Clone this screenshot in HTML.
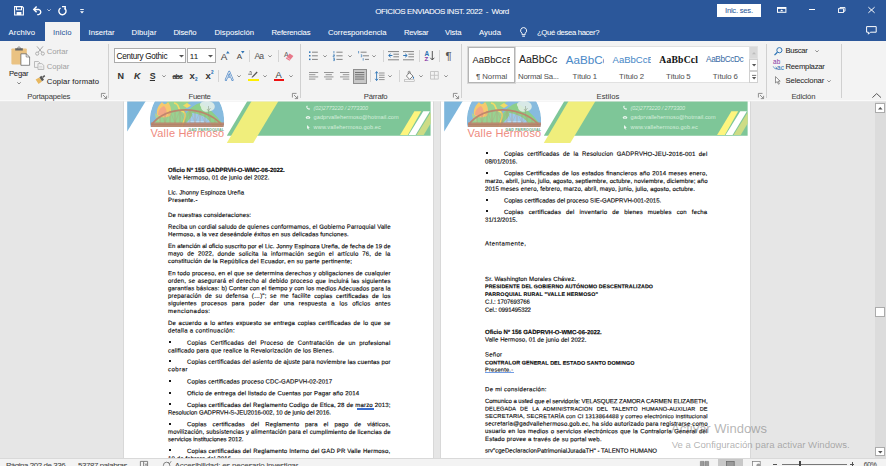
<!DOCTYPE html>
<html><head><meta charset="utf-8"><title>Word</title>
<style>
*{box-sizing:border-box;margin:0;padding:0}
html,body{width:886px;height:466px;overflow:hidden;background:#e6e6e6;font-family:"Liberation Sans",sans-serif;}
.t{position:absolute;white-space:pre;-webkit-text-stroke:0.05px;}
.a{position:absolute}
#title{position:absolute;left:0;top:0;width:886px;height:41px;background:#2b579a}
#tabsel{position:absolute;left:45px;top:22px;width:35px;height:20px;background:#f3f3f3}
#ribbon{position:absolute;left:0;top:41px;width:886px;height:60px;background:#f3f3f3;border-bottom:1px solid #fafafa}
#rshade{position:absolute;left:0;top:101px;width:886px;height:1px;background:rgba(236,236,236,0.55)}
.sep{position:absolute;top:44px;width:1px;height:54px;background:#d0d0d0}
.ssep{position:absolute;width:1px;height:12px;background:#d4d4d4}
#doc{position:absolute;left:0;top:101px;width:886px;height:358px;background:#e6e6e6;overflow:hidden}
.page{position:absolute;top:101px;height:358px;background:#fff;overflow:hidden;border-left:1px solid #d8d8d8;border-right:1px solid #d8d8d8}
#status{position:absolute;left:0;top:458px;width:886px;height:8px;background:#f3f3f3;overflow:hidden;border-top:1px solid #d9d9d9}
svg{position:absolute;overflow:visible}

</style></head><body>
<div id="doc"></div>
<div class="page" style="left:123.0px;width:311.0px"></div><svg style="left:124.0px;top:101px" width="310" height="44" viewBox="0 0 310 44"><path d="M3.2 0H21.8L3.2 30.6Z" fill="#7db6dc"/><path d="M123.4 0H306.6V34.8H102.8Z" fill="#7ec698"/><path d="M127.6 0H154.5L129.3 42H102.8Z" fill="#f0ee7c"/><path d="M290.4 10.3H297.2L283.8 34H276.1Z" fill="#fdf57e"/><path d="M299.3 10.3H305.9L291.6 34H284.6Z" fill="#ffffff"/><path d="M306.6 11.4V22.6L299.7 34H292.6Z" fill="#cddc85"/><clipPath id="cl124"><path d="M25.8 0H100.4V26H25.8Z"/></clipPath><clipPath id="cc124"><circle cx="63" cy="19" r="37.2"/></clipPath><g clip-path="url(#cl124)" opacity="0.92"><g clip-path="url(#cc124)"><circle cx="63" cy="19" r="37.2" fill="#7db6dc"/><path d="M30 26C32 14 38 4 46 -1H66C62 6 58 14 60 26Z" fill="#8fd088"/><path d="M56 26C60 12 68 4 76 2C84 6 92 14 98 22V26Z" fill="#84cb80"/><path d="M52 -1C58 2 64 2 70 -1" fill="#a9d98a"/><path d="M60 26C62 20 70 16 68 12C78 13 88 19 88 26Z" fill="#93c6ea"/><path d="M64 23H84M66 20.5H80" stroke="#dff0fb" stroke-width="0.5" opacity="0.8"/><path d="M50 2C57 3 52 8 58 10C64 12 60 18 58 26" fill="none" stroke="#f0d85a" stroke-width="1.6"/><path d="M59 4.5L63 2L67 4.5L63 7Z" fill="#f0d85a"/><path d="M33 14C32 8 35 4 38 1C40 4 42 4 44 1C47 5 48 10 46 15C42 17 36 17 33 14Z" fill="#f6c561"/><path d="M34 14C34 9 37 6 40 5C43 8 43 12 42 16Z" fill="#f2a07c"/><path d="M31 12C34 14 36 17 36 21C33 20 31 17 31 12Z" fill="#a9cf8f"/><path d="M78 1C82 -1 88 0 90 3C92 6 90 10 86 10C82 12 77 10 77 6C75 4 76 2 78 1Z" fill="#e4f1e6" opacity="0.85"/><path d="M84.5 5V16M83 8L84.5 10L86.5 7" stroke="#8a9a82" stroke-width="0.6" fill="none"/><path d="M28 23.4C42 4 80 4 97.4 23.4" fill="none" stroke="#b8775e" stroke-width="1.8" opacity="0.92"/><path d="M36 15V22M41 11.6V22M46 9.8V22M51 8.8V22M56 8.6V22M61 8.6V22M66 8.8V22M71 9.6V22M76 11V22M81 13V22M86 15.6V22M91 18.6V22" stroke="#b9836a" stroke-width="0.6" opacity="0.75"/><path d="M38 14L41 22L46 10L51 22L56 9L61 22L66 9L71 22L76 11L81 22L86 16" stroke="#b9836a" stroke-width="0.4" fill="none" opacity="0.6"/><path d="M27 21.4H100V26.2H27Z" fill="#b8775e" opacity="0.88"/><path d="M27 23.6H100" stroke="#9a6650" stroke-width="0.5" opacity="0.6"/></g></g><g transform="translate(-1.4 0)"><path d="M183.6 5.2C183.6 7.4 185 8.8 187 8.8L187.4 7.8L186.2 7L185.8 7.4C185.2 7.2 184.8 6.6 184.6 6L185.2 5.8L184.6 4.6Z" fill="#eaf6ee"/><ellipse cx="185.4" cy="16.6" rx="2.2" ry="1.5" fill="#eaf6ee"/><ellipse cx="185.4" cy="16.8" rx="0.9" ry="0.6" fill="#7ec698"/><path d="M184.4 24V28L185.4 27.2L186.2 28.8L186.8 28.5L186 27L187.2 26.8Z" fill="#eaf6ee"/></g></svg>
<div class="t" style="left:313.60px;top:104.79px;font-size:5.4px;line-height:7.02px;color:#d6eedd;font-style:italic;letter-spacing:-0.083px;-webkit-text-stroke:0;">(02)2773220 / 2773300</div>
<div class="t" style="left:313.60px;top:114.36px;font-size:5.6px;line-height:7.28px;color:#d6eedd;letter-spacing:0.056px;-webkit-text-stroke:0;">gadprvallehermoso@hotmail.com</div>
<div class="t" style="left:313.60px;top:124.06px;font-size:5.6px;line-height:7.28px;color:#d6eedd;letter-spacing:0.101px;-webkit-text-stroke:0;">www.vallehermoso.gob.ec</div>
<div class="t" style="left:150.60px;top:126.45px;font-size:11px;line-height:14.3px;color:#ee8a80;letter-spacing:0.189px;-webkit-text-stroke:0;">Valle Hermoso</div>
<div class="t" style="left:188.40px;top:128.06px;font-size:3.6px;line-height:4.68px;color:#6faa86;font-weight:bold;letter-spacing:0.210px;">GAD PARROQUIAL</div>
<div class="page" style="left:440.0px;width:311.0px"></div><svg style="left:441.0px;top:101px" width="310" height="44" viewBox="0 0 310 44"><path d="M3.2 0H21.8L3.2 30.6Z" fill="#7db6dc"/><path d="M123.4 0H306.6V34.8H102.8Z" fill="#7ec698"/><path d="M127.6 0H154.5L129.3 42H102.8Z" fill="#f0ee7c"/><path d="M290.4 10.3H297.2L283.8 34H276.1Z" fill="#fdf57e"/><path d="M299.3 10.3H305.9L291.6 34H284.6Z" fill="#ffffff"/><path d="M306.6 11.4V22.6L299.7 34H292.6Z" fill="#cddc85"/><clipPath id="cl441"><path d="M25.8 0H100.4V26H25.8Z"/></clipPath><clipPath id="cc441"><circle cx="63" cy="19" r="37.2"/></clipPath><g clip-path="url(#cl441)" opacity="0.92"><g clip-path="url(#cc441)"><circle cx="63" cy="19" r="37.2" fill="#7db6dc"/><path d="M30 26C32 14 38 4 46 -1H66C62 6 58 14 60 26Z" fill="#8fd088"/><path d="M56 26C60 12 68 4 76 2C84 6 92 14 98 22V26Z" fill="#84cb80"/><path d="M52 -1C58 2 64 2 70 -1" fill="#a9d98a"/><path d="M60 26C62 20 70 16 68 12C78 13 88 19 88 26Z" fill="#93c6ea"/><path d="M64 23H84M66 20.5H80" stroke="#dff0fb" stroke-width="0.5" opacity="0.8"/><path d="M50 2C57 3 52 8 58 10C64 12 60 18 58 26" fill="none" stroke="#f0d85a" stroke-width="1.6"/><path d="M59 4.5L63 2L67 4.5L63 7Z" fill="#f0d85a"/><path d="M33 14C32 8 35 4 38 1C40 4 42 4 44 1C47 5 48 10 46 15C42 17 36 17 33 14Z" fill="#f6c561"/><path d="M34 14C34 9 37 6 40 5C43 8 43 12 42 16Z" fill="#f2a07c"/><path d="M31 12C34 14 36 17 36 21C33 20 31 17 31 12Z" fill="#a9cf8f"/><path d="M78 1C82 -1 88 0 90 3C92 6 90 10 86 10C82 12 77 10 77 6C75 4 76 2 78 1Z" fill="#e4f1e6" opacity="0.85"/><path d="M84.5 5V16M83 8L84.5 10L86.5 7" stroke="#8a9a82" stroke-width="0.6" fill="none"/><path d="M28 23.4C42 4 80 4 97.4 23.4" fill="none" stroke="#b8775e" stroke-width="1.8" opacity="0.92"/><path d="M36 15V22M41 11.6V22M46 9.8V22M51 8.8V22M56 8.6V22M61 8.6V22M66 8.8V22M71 9.6V22M76 11V22M81 13V22M86 15.6V22M91 18.6V22" stroke="#b9836a" stroke-width="0.6" opacity="0.75"/><path d="M38 14L41 22L46 10L51 22L56 9L61 22L66 9L71 22L76 11L81 22L86 16" stroke="#b9836a" stroke-width="0.4" fill="none" opacity="0.6"/><path d="M27 21.4H100V26.2H27Z" fill="#b8775e" opacity="0.88"/><path d="M27 23.6H100" stroke="#9a6650" stroke-width="0.5" opacity="0.6"/></g></g><g transform="translate(-1.4 0)"><path d="M183.6 5.2C183.6 7.4 185 8.8 187 8.8L187.4 7.8L186.2 7L185.8 7.4C185.2 7.2 184.8 6.6 184.6 6L185.2 5.8L184.6 4.6Z" fill="#eaf6ee"/><ellipse cx="185.4" cy="16.6" rx="2.2" ry="1.5" fill="#eaf6ee"/><ellipse cx="185.4" cy="16.8" rx="0.9" ry="0.6" fill="#7ec698"/><path d="M184.4 24V28L185.4 27.2L186.2 28.8L186.8 28.5L186 27L187.2 26.8Z" fill="#eaf6ee"/></g></svg>
<div class="t" style="left:630.60px;top:104.79px;font-size:5.4px;line-height:7.02px;color:#d6eedd;font-style:italic;letter-spacing:-0.083px;-webkit-text-stroke:0;">(02)2773220 / 2773300</div>
<div class="t" style="left:630.60px;top:114.36px;font-size:5.6px;line-height:7.28px;color:#d6eedd;letter-spacing:0.056px;-webkit-text-stroke:0;">gadprvallehermoso@hotmail.com</div>
<div class="t" style="left:630.60px;top:124.06px;font-size:5.6px;line-height:7.28px;color:#d6eedd;letter-spacing:0.101px;-webkit-text-stroke:0;">www.vallehermoso.gob.ec</div>
<div class="t" style="left:467.60px;top:126.45px;font-size:11px;line-height:14.3px;color:#ee8a80;letter-spacing:0.189px;-webkit-text-stroke:0;">Valle Hermoso</div>
<div class="t" style="left:505.40px;top:128.06px;font-size:3.6px;line-height:4.68px;color:#6faa86;font-weight:bold;letter-spacing:0.210px;">GAD PARROQUIAL</div>
<div class="t" style="left:168.20px;top:165px;font-size:6.05px;line-height:8px;color:#0a0a0a;transform-origin:0 50%;transform:translateY(0.90px) rotate(0.03deg);font-weight:bold;letter-spacing:-0.060px;-webkit-text-stroke:0.14px #0a0a0a;">Oficio N° 155 GADPRVH-O-WMC-06-2022.</div>
<div class="t" style="left:168.20px;top:173px;font-size:6.05px;line-height:8px;color:#0a0a0a;transform-origin:0 50%;transform:translateY(0.40px) rotate(0.03deg);letter-spacing:0.077px;-webkit-text-stroke:0.14px #0a0a0a;">Valle Hermoso, 01 de junio del 2022.</div>
<div class="t" style="left:168.20px;top:188px;font-size:6.05px;line-height:8px;color:#0a0a0a;transform-origin:0 50%;transform:translateY(0.40px) rotate(0.03deg);letter-spacing:0.028px;-webkit-text-stroke:0.14px #0a0a0a;">Lic. Jhonny Espinoza Ureña</div>
<div class="t" style="left:168.20px;top:195px;font-size:6.05px;line-height:8px;color:#0a0a0a;transform-origin:0 50%;transform:translateY(0.90px) rotate(0.03deg);letter-spacing:0.177px;-webkit-text-stroke:0.14px #0a0a0a;">Presente.-</div>
<div class="t" style="left:168.20px;top:210px;font-size:6.05px;line-height:8px;color:#0a0a0a;transform-origin:0 50%;transform:translateY(0.90px) rotate(0.03deg);letter-spacing:0.123px;-webkit-text-stroke:0.14px #0a0a0a;">De nuestras consideraciones:</div>
<div class="t" style="left:168.20px;top:222px;font-size:6.05px;line-height:8px;color:#0a0a0a;transform-origin:0 50%;transform:translateY(0.70px) rotate(0.03deg);letter-spacing:0.109px;-webkit-text-stroke:0.14px #0a0a0a;">Reciba un cordial saludo de quienes conformamos, el Gobierno Parroquial Valle</div>
<div class="t" style="left:168.20px;top:230px;font-size:6.05px;line-height:8px;color:#0a0a0a;transform-origin:0 50%;transform:translateY(0.20px) rotate(0.03deg);letter-spacing:0.090px;-webkit-text-stroke:0.14px #0a0a0a;">Hermoso, a la vez deseándole éxitos en sus delicadas funciones.</div>
<div class="t" style="left:168.20px;top:242px;font-size:6.05px;line-height:8px;color:#0a0a0a;transform-origin:0 50%;transform:translateY(0.10px) rotate(0.03deg);letter-spacing:0.047px;-webkit-text-stroke:0.14px #0a0a0a;">En atención al oficio suscrito por el Lic. Jonny Espinoza Ureña, de fecha de 19 de</div>
<div class="t" style="left:168.20px;top:249px;font-size:6.05px;line-height:8px;color:#0a0a0a;transform-origin:0 50%;transform:translateY(0.60px) rotate(0.03deg);letter-spacing:0.150px;width:222.60px;text-align:justify;text-align-last:justify;white-space:normal;-webkit-text-stroke:0.14px #0a0a0a;">mayo de 2022, donde solicita la información según el artículo 76, de la</div>
<div class="t" style="left:168.20px;top:257px;font-size:6.05px;line-height:8px;color:#0a0a0a;transform-origin:0 50%;transform:translateY(0.10px) rotate(0.03deg);letter-spacing:0.175px;-webkit-text-stroke:0.14px #0a0a0a;">constitución de la República del Ecuador, en su parte pertinente;</div>
<div class="t" style="left:168.20px;top:269px;font-size:6.05px;line-height:8px;color:#0a0a0a;transform-origin:0 50%;transform:translateY(0.20px) rotate(0.03deg);letter-spacing:0.150px;width:222.60px;text-align:justify;text-align-last:justify;white-space:normal;-webkit-text-stroke:0.14px #0a0a0a;">En todo proceso, en el que se determina derechos y obligaciones de cualquier</div>
<div class="t" style="left:168.20px;top:276px;font-size:6.05px;line-height:8px;color:#0a0a0a;transform-origin:0 50%;transform:translateY(0.80px) rotate(0.03deg);letter-spacing:0.150px;width:222.60px;text-align:justify;text-align-last:justify;white-space:normal;-webkit-text-stroke:0.14px #0a0a0a;">orden, se asegurará el derecho al debido proceso que incluirá las siguientes</div>
<div class="t" style="left:168.20px;top:284px;font-size:6.05px;line-height:8px;color:#0a0a0a;transform-origin:0 50%;transform:translateY(0.30px) rotate(0.03deg);letter-spacing:0.138px;-webkit-text-stroke:0.14px #0a0a0a;">garantías básicas: b) Contar con el tiempo y con los medios Adecuados para la</div>
<div class="t" style="left:168.20px;top:291px;font-size:6.05px;line-height:8px;color:#0a0a0a;transform-origin:0 50%;transform:translateY(0.80px) rotate(0.03deg);letter-spacing:0.150px;width:222.60px;text-align:justify;text-align-last:justify;white-space:normal;-webkit-text-stroke:0.14px #0a0a0a;">preparación de su defensa (…)&quot;; se me facilite copias certificadas de los</div>
<div class="t" style="left:168.20px;top:299px;font-size:6.05px;line-height:8px;color:#0a0a0a;transform-origin:0 50%;transform:translateY(0.30px) rotate(0.03deg);letter-spacing:0.150px;width:222.60px;text-align:justify;text-align-last:justify;white-space:normal;-webkit-text-stroke:0.14px #0a0a0a;">siguientes procesos para poder dar una respuesta a los oficios antes</div>
<div class="t" style="left:168.20px;top:306px;font-size:6.05px;line-height:8px;color:#0a0a0a;transform-origin:0 50%;transform:translateY(0.90px) rotate(0.03deg);letter-spacing:0.395px;-webkit-text-stroke:0.14px #0a0a0a;">mencionados:</div>
<div class="t" style="left:168.20px;top:318px;font-size:6.05px;line-height:8px;color:#0a0a0a;transform-origin:0 50%;transform:translateY(0.90px) rotate(0.03deg);letter-spacing:0.150px;width:222.60px;text-align:justify;text-align-last:justify;white-space:normal;-webkit-text-stroke:0.14px #0a0a0a;">De acuerdo a lo antes expuesto se entrega copias certificadas de lo que se</div>
<div class="t" style="left:168.20px;top:326px;font-size:6.05px;line-height:8px;color:#0a0a0a;transform-origin:0 50%;transform:translateY(0.50px) rotate(0.03deg);letter-spacing:0.291px;-webkit-text-stroke:0.14px #0a0a0a;">detalla a continuación:</div>
<div class="a" style="left:168.50px;top:341.10px;width:2.2px;height:2.2px;background:#1a1a1a"></div>
<div class="t" style="left:187.40px;top:338px;font-size:6.05px;line-height:8px;color:#0a0a0a;transform-origin:0 50%;transform:translateY(0.80px) rotate(0.03deg);letter-spacing:0.150px;width:203.40px;text-align:justify;text-align-last:justify;white-space:normal;-webkit-text-stroke:0.14px #0a0a0a;">Copias Certificadas del Proceso de Contratación de un profesional</div>
<div class="t" style="left:168.20px;top:346px;font-size:6.05px;line-height:8px;color:#0a0a0a;transform-origin:0 50%;transform:translateY(0.40px) rotate(0.03deg);letter-spacing:0.141px;-webkit-text-stroke:0.14px #0a0a0a;">calificado para que realice la Revalorización de los Bienes.</div>
<div class="a" style="left:168.50px;top:360.10px;width:2.2px;height:2.2px;background:#1a1a1a"></div>
<div class="t" style="left:187.40px;top:357px;font-size:6.05px;line-height:8px;color:#0a0a0a;transform-origin:0 50%;transform:translateY(0.80px) rotate(0.03deg);letter-spacing:0.124px;-webkit-text-stroke:0.14px #0a0a0a;">Copias certificadas del asiento de ajuste para noviembre las cuentas por</div>
<div class="t" style="left:168.20px;top:365px;font-size:6.05px;line-height:8px;color:#0a0a0a;transform-origin:0 50%;transform:translateY(0.30px) rotate(0.03deg);letter-spacing:0.472px;-webkit-text-stroke:0.14px #0a0a0a;">cobrar</div>
<div class="a" style="left:168.50px;top:379.80px;width:2.2px;height:2.2px;background:#1a1a1a"></div>
<div class="t" style="left:187.40px;top:377px;font-size:6.05px;line-height:8px;color:#0a0a0a;transform-origin:0 50%;transform:translateY(0.50px) rotate(0.03deg);letter-spacing:0.095px;-webkit-text-stroke:0.14px #0a0a0a;">Copias certificadas proceso CDC-GADPVH-02-2017</div>
<div class="a" style="left:168.50px;top:391.50px;width:2.2px;height:2.2px;background:#1a1a1a"></div>
<div class="t" style="left:187.40px;top:389px;font-size:6.05px;line-height:8px;color:#0a0a0a;transform-origin:0 50%;transform:translateY(0.20px) rotate(0.03deg);letter-spacing:0.162px;-webkit-text-stroke:0.14px #0a0a0a;">Oficio de entrega del listado de Cuentas por Pagar año 2014</div>
<div class="a" style="left:168.50px;top:403.20px;width:2.2px;height:2.2px;background:#1a1a1a"></div>
<div class="t" style="left:187.40px;top:400px;font-size:6.05px;line-height:8px;color:#0a0a0a;transform-origin:0 50%;transform:translateY(0.90px) rotate(0.03deg);letter-spacing:0.149px;-webkit-text-stroke:0.14px #0a0a0a;">Copias certificadas del Reglamento Codigo de Etica, 28 de marzo 2013;</div>
<div class="t" style="left:168.20px;top:408px;font-size:6.05px;line-height:8px;color:#0a0a0a;transform-origin:0 50%;transform:translateY(0.40px) rotate(0.03deg);letter-spacing:-0.055px;-webkit-text-stroke:0.14px #0a0a0a;">Resolucion GADPRVH-S-JEU2016-002, 10 de junio del 2016.</div>
<div class="a" style="left:168.50px;top:422.50px;width:2.2px;height:2.2px;background:#1a1a1a"></div>
<div class="t" style="left:187.40px;top:420px;font-size:6.05px;line-height:8px;color:#0a0a0a;transform-origin:0 50%;transform:translateY(0.20px) rotate(0.03deg);letter-spacing:0.150px;width:203.40px;text-align:justify;text-align-last:justify;white-space:normal;-webkit-text-stroke:0.14px #0a0a0a;">Copias certificadas del Reglamento para el pago de viáticos,</div>
<div class="t" style="left:168.20px;top:427px;font-size:6.05px;line-height:8px;color:#0a0a0a;transform-origin:0 50%;transform:translateY(0.80px) rotate(0.03deg);letter-spacing:0.135px;-webkit-text-stroke:0.14px #0a0a0a;">movilización, subsistencias y alimentación para el cumplimiento de licencias de</div>
<div class="t" style="left:168.20px;top:435px;font-size:6.05px;line-height:8px;color:#0a0a0a;transform-origin:0 50%;transform:translateY(0.30px) rotate(0.03deg);letter-spacing:0.007px;-webkit-text-stroke:0.14px #0a0a0a;">servicios instituciones 2012.</div>
<div class="a" style="left:168.50px;top:449.30px;width:2.2px;height:2.2px;background:#1a1a1a"></div>
<div class="t" style="left:187.40px;top:447px;font-size:6.05px;line-height:8px;color:#0a0a0a;transform-origin:0 50%;transform:translateY(0.00px) rotate(0.03deg);letter-spacing:0.150px;width:203.40px;text-align:justify;text-align-last:justify;white-space:normal;-webkit-text-stroke:0.14px #0a0a0a;">Copias certificadas del Reglamento Interno del GAD PR Valle Hermoso,</div>
<div class="t" style="left:168.20px;top:454px;font-size:6.05px;line-height:8px;color:#0a0a0a;transform-origin:0 50%;transform:translateY(0.50px) rotate(0.03deg);letter-spacing:0.102px;-webkit-text-stroke:0.14px #0a0a0a;">10 de febrero del 2016</div>
<div class="a" style="left:357.4px;top:407.6px;width:16.8px;height:1.7px;border-top:0.6px solid #3b6fd0;border-bottom:0.6px solid #3b6fd0"></div>
<div class="a" style="left:485.50px;top:152.10px;width:2.2px;height:2.2px;background:#1a1a1a"></div>
<div class="t" style="left:504.40px;top:149px;font-size:6.05px;line-height:8px;color:#0a0a0a;transform-origin:0 50%;transform:translateY(0.80px) rotate(0.03deg);letter-spacing:0.150px;width:203.40px;text-align:justify;text-align-last:justify;white-space:normal;-webkit-text-stroke:0.14px #0a0a0a;">Copias certificadas de la Resolucion GADPRVHO-JEU-2016-001 del</div>
<div class="t" style="left:485.20px;top:157px;font-size:6.05px;line-height:8px;color:#0a0a0a;transform-origin:0 50%;transform:translateY(0.50px) rotate(0.03deg);letter-spacing:0.045px;-webkit-text-stroke:0.14px #0a0a0a;">08/01/2016.</div>
<div class="a" style="left:485.50px;top:171.50px;width:2.2px;height:2.2px;background:#1a1a1a"></div>
<div class="t" style="left:504.40px;top:169px;font-size:6.05px;line-height:8px;color:#0a0a0a;transform-origin:0 50%;transform:translateY(0.20px) rotate(0.03deg);letter-spacing:0.150px;width:203.40px;text-align:justify;text-align-last:justify;white-space:normal;-webkit-text-stroke:0.14px #0a0a0a;">Copias Certificadas de los estados financieros año 2014 meses enero,</div>
<div class="t" style="left:485.20px;top:176px;font-size:6.05px;line-height:8px;color:#0a0a0a;transform-origin:0 50%;transform:translateY(0.90px) rotate(0.03deg);letter-spacing:0.097px;-webkit-text-stroke:0.14px #0a0a0a;">marzo, abril, junio, julio, agosto, septiembre, octubre, noviembre, diciembre; año</div>
<div class="t" style="left:485.20px;top:184px;font-size:6.05px;line-height:8px;color:#0a0a0a;transform-origin:0 50%;transform:translateY(0.80px) rotate(0.03deg);letter-spacing:0.096px;-webkit-text-stroke:0.14px #0a0a0a;">2015 meses enero, febrero, marzo, abril, mayo, junio, julio, agosto, octubre.</div>
<div class="a" style="left:485.50px;top:198.70px;width:2.2px;height:2.2px;background:#1a1a1a"></div>
<div class="t" style="left:504.40px;top:196px;font-size:6.05px;line-height:8px;color:#0a0a0a;transform-origin:0 50%;transform:translateY(0.40px) rotate(0.03deg);letter-spacing:0.013px;-webkit-text-stroke:0.14px #0a0a0a;">Copias certificadas del proceso SIE-GADPRVH-001-2015.</div>
<div class="a" style="left:485.50px;top:210.30px;width:2.2px;height:2.2px;background:#1a1a1a"></div>
<div class="t" style="left:504.40px;top:208px;font-size:6.05px;line-height:8px;color:#0a0a0a;transform-origin:0 50%;transform:translateY(0.00px) rotate(0.03deg);letter-spacing:0.150px;width:203.40px;text-align:justify;text-align-last:justify;white-space:normal;-webkit-text-stroke:0.14px #0a0a0a;">Copias certificadas del inventario de bienes muebles con fecha</div>
<div class="t" style="left:485.20px;top:215px;font-size:6.05px;line-height:8px;color:#0a0a0a;transform-origin:0 50%;transform:translateY(0.80px) rotate(0.03deg);letter-spacing:0.045px;-webkit-text-stroke:0.14px #0a0a0a;">31/12/2015.</div>
<div class="t" style="left:485.20px;top:239px;font-size:6.05px;line-height:8px;color:#0a0a0a;transform-origin:0 50%;transform:translateY(0.60px) rotate(0.03deg);letter-spacing:0.457px;-webkit-text-stroke:0.14px #0a0a0a;">Atentamente,</div>
<div class="t" style="left:485.20px;top:274px;font-size:6.05px;line-height:8px;color:#0a0a0a;transform-origin:0 50%;transform:translateY(0.90px) rotate(0.03deg);letter-spacing:0.109px;-webkit-text-stroke:0.14px #0a0a0a;">Sr. Washington Morales Chávez.</div>
<div class="t" style="left:485.20px;top:282px;font-size:5.3px;line-height:8px;color:#0a0a0a;transform-origin:0 50%;transform:translateY(0.20px) rotate(0.03deg);font-weight:bold;letter-spacing:0.105px;-webkit-text-stroke:0.14px #0a0a0a;">PRESIDENTE DEL GOBIERNO AUTÓNOMO DESCENTRALIZADO</div>
<div class="t" style="left:485.20px;top:289px;font-size:5.3px;line-height:8px;color:#0a0a0a;transform-origin:0 50%;transform:translateY(0.90px) rotate(0.03deg);font-weight:bold;letter-spacing:0.182px;-webkit-text-stroke:0.14px #0a0a0a;">PARROQUIAL RURAL &quot;VALLE HERMOSO&quot;</div>
<div class="t" style="left:485.20px;top:297px;font-size:6.05px;line-height:8px;color:#0a0a0a;transform-origin:0 50%;transform:translateY(0.80px) rotate(0.03deg);letter-spacing:-0.094px;-webkit-text-stroke:0.14px #0a0a0a;">C.I.: 1707693766</div>
<div class="t" style="left:485.20px;top:305px;font-size:6.05px;line-height:8px;color:#0a0a0a;transform-origin:0 50%;transform:translateY(0.70px) rotate(0.03deg);letter-spacing:-0.117px;-webkit-text-stroke:0.14px #0a0a0a;">Cel.: 0991495322</div>
<div class="t" style="left:485.20px;top:328px;font-size:6.05px;line-height:8px;color:#0a0a0a;transform-origin:0 50%;transform:translateY(0.10px) rotate(0.03deg);font-weight:bold;letter-spacing:-0.060px;-webkit-text-stroke:0.14px #0a0a0a;">Oficio N° 156 GADPRVH-O-WMC-06-2022.</div>
<div class="t" style="left:485.20px;top:335px;font-size:6.05px;line-height:8px;color:#0a0a0a;transform-origin:0 50%;transform:translateY(0.60px) rotate(0.03deg);letter-spacing:0.077px;-webkit-text-stroke:0.14px #0a0a0a;">Valle Hermoso, 01 de junio del 2022.</div>
<div class="t" style="left:485.20px;top:350px;font-size:6.05px;line-height:8px;color:#0a0a0a;transform-origin:0 50%;transform:translateY(0.60px) rotate(0.03deg);letter-spacing:0.215px;-webkit-text-stroke:0.14px #0a0a0a;">Señor</div>
<div class="t" style="left:485.20px;top:358px;font-size:5.4px;line-height:8px;color:#0a0a0a;transform-origin:0 50%;transform:translateY(0.60px) rotate(0.03deg);font-weight:bold;letter-spacing:0.081px;-webkit-text-stroke:0.14px #0a0a0a;">CONTRALOR GENERAL DEL ESTADO SANTO DOMINGO</div>
<div class="t" style="left:485.20px;top:365px;font-size:5.6px;line-height:8px;color:#0a0a0a;transform-origin:0 50%;transform:translateY(0.50px) rotate(0.03deg);letter-spacing:0.243px;-webkit-text-stroke:0.14px #0a0a0a;">Presente.-</div>
<div class="a" style="left:485px;top:371.7px;width:28.6px;height:1.5px;background:#5b8de0;opacity:0.85"></div>
<div class="t" style="left:485.20px;top:385px;font-size:6.05px;line-height:8px;color:#0a0a0a;transform-origin:0 50%;transform:translateY(0.20px) rotate(0.03deg);letter-spacing:0.265px;-webkit-text-stroke:0.14px #0a0a0a;">De mi consideración:</div>
<div class="t" style="left:485.20px;top:397px;font-size:6.05px;line-height:8px;color:#0a0a0a;transform-origin:0 50%;transform:translateY(0.10px) rotate(0.03deg);letter-spacing:-0.052px;-webkit-text-stroke:0.14px #0a0a0a;">Comunico a usted que el servidor/a: VELASQUEZ ZAMORA CARMEN ELIZABETH,</div>
<div class="t" style="left:485.20px;top:404px;font-size:5.5px;line-height:8px;color:#0a0a0a;transform-origin:0 50%;transform:translateY(0.60px) rotate(0.03deg);letter-spacing:0.150px;width:222.60px;text-align:justify;text-align-last:justify;white-space:normal;-webkit-text-stroke:0.14px #0a0a0a;">DELEGADA DE LA ADMINISTRACION DEL TALENTO HUMANO-AUXILIAR DE</div>
<div class="t" style="left:485.20px;top:412px;font-size:5.8px;line-height:8px;color:#0a0a0a;transform-origin:0 50%;transform:translateY(0.10px) rotate(0.03deg);letter-spacing:0.137px;-webkit-text-stroke:0.14px #0a0a0a;">SECRETARIA, SECRETARÍA con CI 1313864488 y correo electrónico institucional</div>
<div class="t" style="left:485.20px;top:419px;font-size:6.05px;line-height:8px;color:#0a0a0a;transform-origin:0 50%;transform:translateY(0.60px) rotate(0.03deg);letter-spacing:0.145px;-webkit-text-stroke:0.14px #0a0a0a;">secretaria@gadvallehermoso.gob.ec, ha sido autorizado para registrarse como</div>
<div class="t" style="left:485.20px;top:427px;font-size:6.05px;line-height:8px;color:#0a0a0a;transform-origin:0 50%;transform:translateY(0.10px) rotate(0.03deg);letter-spacing:0.150px;width:222.60px;text-align:justify;text-align-last:justify;white-space:normal;-webkit-text-stroke:0.14px #0a0a0a;">usuario en los medios o servicios electrónicos que la Contraloría General del</div>
<div class="t" style="left:485.20px;top:435px;font-size:6.05px;line-height:8px;color:#0a0a0a;transform-origin:0 50%;transform:translateY(0.10px) rotate(0.03deg);letter-spacing:0.171px;-webkit-text-stroke:0.14px #0a0a0a;">Estado provee a través de su portal web.</div>
<div class="t" style="left:485.20px;top:446px;font-size:6.05px;line-height:8px;color:#0a0a0a;transform-origin:0 50%;transform:translateY(0.60px) rotate(0.03deg);letter-spacing:0.000px;-webkit-text-stroke:0.14px #0a0a0a;">srv&quot;cgeDeclaracionPatrimonialJuradaTH&quot; - TALENTO HUMANO</div>
<div class="t" style="left:671.00px;top:421.35px;font-size:13px;line-height:16.9px;color:rgba(120,120,120,0.55);letter-spacing:-0.006px;">Activar Windows</div>
<div class="t" style="left:671.70px;top:438.76px;font-size:9.6px;line-height:12.48px;color:rgba(120,120,120,0.55);letter-spacing:-0.003px;">Ve a Configuración para activar Windows.</div>
<div class="a" style="left:875.4px;top:101px;width:10.6px;height:358px;background:#dcdcdc"></div>
<div class="a" style="left:875.4px;top:103.3px;width:9.8px;height:9.6px;background:#fff;border:1px solid #ababab"></div>
<svg style="left:878px;top:106.6px" width="4.6" height="2.6" viewBox="0 0 4.6 2.6"><path d="M0 2.6L2.3 0L4.6 2.6Z" fill="#555"/></svg>
<div class="a" style="left:875.4px;top:306.8px;width:9.8px;height:10px;background:#fff;border:1px solid #ababab"></div>
<div class="a" style="left:875.4px;top:447.2px;width:9.8px;height:9.2px;background:#fff;border:1px solid #ababab"></div>
<svg style="left:878px;top:450.8px" width="4.6" height="2.6" viewBox="0 0 4.6 2.6"><path d="M0 0H4.6L2.3 2.6Z" fill="#555"/></svg>
<div id="title"></div><div id="tabsel"></div><div id="ribbon"></div><div id="rshade"></div>
<svg style="left:13.8px;top:6.3px" width="10" height="9.6" viewBox="0 0 10 9.6"><path d="M0.6 0.6H8.2L9.4 1.8V9H0.6Z" fill="none" stroke="#fff" stroke-width="1.1"/><rect x="2.5" y="0.6" width="5" height="3.2" fill="none" stroke="#fff" stroke-width="1"/><rect x="2.6" y="6" width="4.8" height="3" fill="#fff"/></svg>
<svg style="left:32.5px;top:6.2px" width="10" height="9" viewBox="0 0 10 9"><path d="M1 3.4H5.6A3 2.7 0 0 1 5.6 8.6H4.2" fill="none" stroke="#fff" stroke-width="1.45"/><path d="M3.6 0.6L0.8 3.4L3.6 6.2" fill="none" stroke="#fff" stroke-width="1.45"/></svg>
<svg style="left:46.9px;top:9.4px" width="4" height="2.4" viewBox="0 0 4 2.4"><path d="M0.3 0.3 L2 2 L3.7 0.3" fill="none" stroke="#dfe6f2" stroke-width="0.8"/></svg>
<svg style="left:58.2px;top:6.2px" width="9" height="9" viewBox="0 0 9 9"><path d="M6.6 2.2A3.6 3.6 0 1 1 2.6 2" fill="none" stroke="#fff" stroke-width="1.4"/><path d="M4 0.6H7.2V3.8" fill="none" stroke="#fff" stroke-width="1.4"/></svg>
<svg style="left:80px;top:8.6px" width="4" height="5" viewBox="0 0 4 5"><rect x="0.2" y="0" width="3.6" height="0.9" fill="#fff"/><path d="M0 2.2H4L2 4.4Z" fill="#fff"/></svg>
<div class="t" style="left:375.30px;top:7.40px;font-size:8px;line-height:10.4px;color:#fff;letter-spacing:-0.422px;">OFICIOS ENVIADOS INST. 2022  -  Word</div>
<div class="a" style="left:717px;top:4px;width:43.5px;height:12.5px;background:#fff"></div>
<div class="t" style="left:725.00px;top:6.16px;font-size:7.6px;line-height:9.88px;color:#2b579a;letter-spacing:-0.219px;">Inic. ses.</div>
<svg style="left:776.8px;top:7px" width="9.4" height="5.8" viewBox="0 0 9.4 5.8"><rect x="0.5" y="0.5" width="8.4" height="4.8" fill="none" stroke="#fff" stroke-width="1"/><rect x="0.5" y="0.5" width="8.4" height="1.4" fill="#fff"/><path d="M3 4.3L4.7 2.6L6.4 4.3Z" fill="#fff"/></svg>
<div class="a" style="left:808.8px;top:9.4px;width:6.4px;height:1px;background:#fff"></div>
<svg style="left:837.6px;top:6.8px" width="7.6" height="6" viewBox="0 0 7.6 6"><rect x="0.5" y="1.7" width="5" height="3.8" fill="none" stroke="#fff" stroke-width="0.9"/><path d="M2 1.7V0.5H7V4.2H5.6" fill="none" stroke="#fff" stroke-width="0.9"/></svg>
<svg style="left:867.5px;top:6.8px" width="7" height="6" viewBox="0 0 7 6"><path d="M0.4 0.2L6.6 5.8M6.6 0.2L0.4 5.8" stroke="#fff" stroke-width="1" fill="none"/></svg>
<svg style="left:865.8px;top:26.3px" width="10.8" height="8.8" viewBox="0 0 10.8 8.8"><path d="M0.6 0.6H10.2V6.2H4.4L2.4 8.2V6.2H0.6Z" fill="none" stroke="#fff" stroke-width="1"/></svg>
<div class="t" style="left:8.50px;top:28.09px;font-size:7.7px;line-height:10.01px;color:#fff;letter-spacing:0.143px;">Archivo</div>
<div class="t" style="left:88.50px;top:28.09px;font-size:7.7px;line-height:10.01px;color:#fff;letter-spacing:-0.009px;">Insertar</div>
<div class="t" style="left:131.50px;top:28.09px;font-size:7.7px;line-height:10.01px;color:#fff;letter-spacing:0.107px;">Dibujar</div>
<div class="t" style="left:173.50px;top:28.09px;font-size:7.7px;line-height:10.01px;color:#fff;letter-spacing:-0.188px;">Diseño</div>
<div class="t" style="left:214.50px;top:28.09px;font-size:7.7px;line-height:10.01px;color:#fff;letter-spacing:0.019px;">Disposición</div>
<div class="t" style="left:271.50px;top:28.09px;font-size:7.7px;line-height:10.01px;color:#fff;letter-spacing:-0.203px;">Referencias</div>
<div class="t" style="left:328.00px;top:28.09px;font-size:7.7px;line-height:10.01px;color:#fff;letter-spacing:-0.003px;">Correspondencia</div>
<div class="t" style="left:404.00px;top:28.09px;font-size:7.7px;line-height:10.01px;color:#fff;letter-spacing:-0.260px;">Revisar</div>
<div class="t" style="left:445.00px;top:28.09px;font-size:7.7px;line-height:10.01px;color:#fff;letter-spacing:-0.113px;">Vista</div>
<div class="t" style="left:479.00px;top:28.09px;font-size:7.7px;line-height:10.01px;color:#fff;letter-spacing:0.082px;">Ayuda</div>
<div class="t" style="left:537.00px;top:28.09px;font-size:7.7px;line-height:10.01px;color:#fff;letter-spacing:-0.341px;">¿Qué desea hacer?</div>
<div class="t" style="left:53.00px;top:28.09px;font-size:7.7px;line-height:10.01px;color:#2b579a;letter-spacing:0.109px;">Inicio</div>
<svg style="left:520.2px;top:26.6px" width="7.2" height="10.8" viewBox="0 0 6.4 9.6"><path d="M3.2 0.5A2.7 2.7 0 0 1 4.6 5.5V6.8H1.8V5.5A2.7 2.7 0 0 1 3.2 0.5Z" fill="none" stroke="#fff" stroke-width="0.85"/><path d="M2 8.2H4.4" stroke="#fff" stroke-width="0.85"/></svg>
<div class="sep" style="left:108px"></div>
<div class="sep" style="left:300px"></div>
<div class="sep" style="left:461px"></div>
<div class="sep" style="left:766px"></div>
<div class="sep" style="left:841px"></div>
<svg style="left:10.6px;top:46.4px" width="19" height="19.8" viewBox="0 0 19 19.8"><rect x="0.4" y="2.4" width="15.4" height="16" rx="0.8" fill="#eac282"/><path d="M4.2 4.6V2.2H6.4A1.6 1.7 0 0 1 9.6 2.2H11.8V4.6Z" fill="#636363"/><circle cx="8" cy="1.7" r="0.7" fill="#f3f3f3"/><path d="M9.9 7.8H15.2L18.6 11V19.3H9.9Z" fill="#fff" stroke="#5a5a5a" stroke-width="0.7"/><path d="M15.2 7.8V11H18.6" fill="none" stroke="#5a5a5a" stroke-width="0.6"/></svg>
<div class="t" style="left:9.00px;top:69.00px;font-size:7.7px;line-height:10.01px;color:#262626;letter-spacing:-0.254px;">Pegar</div>
<svg style="left:16.8px;top:82.0px" width="4" height="2.4" viewBox="0 0 4 2.4"><path d="M0.3 0.3 L2 2 L3.7 0.3" fill="none" stroke="#666" stroke-width="0.8"/></svg>
<svg style="left:34.6px;top:45.6px" width="10" height="9.6" viewBox="0 0 10 9.6"><path d="M2 0.4L7 6.4M8 0.4L3 6.4" stroke="#a8a8a8" stroke-width="1" fill="none"/><circle cx="2.2" cy="7.6" r="1.6" fill="none" stroke="#a8a8a8" stroke-width="0.9"/><circle cx="7.8" cy="7.6" r="1.6" fill="none" stroke="#a8a8a8" stroke-width="0.9"/></svg>
<div class="t" style="left:46.80px;top:46.70px;font-size:7.7px;line-height:10.01px;color:#a3a3a3;letter-spacing:-0.032px;">Cortar</div>
<svg style="left:34.2px;top:61px" width="10.4" height="9" viewBox="0 0 10.4 9"><path d="M0.5 0.5H4.4L6 2V6.4H0.5Z" fill="#f3f3f3" stroke="#b4b4b4" stroke-width="0.9"/><path d="M4 2.6H7.8L9.8 4.4V8.5H4Z" fill="#f3f3f3" stroke="#b4b4b4" stroke-width="0.9"/><path d="M5.2 5.4H8.4M5.2 6.9H8.4" stroke="#c4c4c4" stroke-width="0.6"/></svg>
<div class="t" style="left:46.80px;top:61.70px;font-size:7.7px;line-height:10.01px;color:#a3a3a3;letter-spacing:-0.011px;">Copiar</div>
<svg style="left:34.6px;top:75.4px" width="10.6" height="9.6" viewBox="0 0 10.6 9.6"><path d="M0.6 4.6L4.2 2.4L7 6.6L3.6 9Z" fill="#e8b860"/><path d="M4.4 2.2L6.4 0.8L9 4.8L7 6.2Z" fill="#555"/><path d="M7.6 2.4L9.8 0.6" stroke="#555" stroke-width="1.4"/></svg>
<div class="t" style="left:46.80px;top:76.70px;font-size:7.7px;line-height:10.01px;color:#262626;letter-spacing:0.112px;">Copiar formato</div>
<div class="t" style="left:27.30px;top:91.70px;font-size:7.7px;line-height:10.01px;color:#444;letter-spacing:-0.210px;">Portapapeles</div>
<svg style="left:100.6px;top:93px" width="6" height="6" viewBox="0 0 6 6"><path d="M0.4 4.5V0.4H4.5" fill="none" stroke="#777" stroke-width="0.8"/><path d="M2 2L5.4 5.4M5.6 2.8V5.6H2.8" fill="none" stroke="#777" stroke-width="0.8"/></svg>
<div class="a" style="left:114px;top:48.4px;width:72px;height:15px;background:#fff;border:1px solid #ababab"></div>
<div class="a" style="left:187.3px;top:48.4px;width:28.4px;height:15px;background:#fff;border:1px solid #ababab"></div>
<div class="t" style="left:116.60px;top:51.57px;font-size:8.2px;line-height:10.66px;color:#222;letter-spacing:-0.285px;">Century Gothic</div>
<div class="t" style="left:189.80px;top:51.70px;font-size:8px;line-height:10.4px;color:#222;">11</div>
<svg style="left:178.8px;top:55.099999999999994px" width="5" height="3" viewBox="0 0 5 3"><path d="M0 0 L5 0 L2.5 2.6Z" fill="#555"/></svg>
<svg style="left:208.1px;top:55.099999999999994px" width="5" height="3" viewBox="0 0 5 3"><path d="M0 0 L5 0 L2.5 2.6Z" fill="#555"/></svg>
<div class="t" style="left:117.60px;top:70.85px;font-size:9px;line-height:11.7px;color:#333;font-weight:bold;letter-spacing:0.100px;">N</div>
<div class="t" style="left:134.00px;top:70.85px;font-size:9px;line-height:11.7px;color:#333;font-weight:bold;font-style:italic;letter-spacing:-0.900px;">K</div>
<div class="t" style="left:149.80px;top:71.18px;font-size:8.8px;line-height:11.44px;color:#333;font-weight:bold;letter-spacing:-0.675px;text-decoration:underline;">S</div>
<svg style="left:162px;top:75.2px" width="4" height="2.4" viewBox="0 0 4 2.4"><path d="M0.3 0.3 L2 2 L3.7 0.3" fill="none" stroke="#777" stroke-width="0.8"/></svg>
<div class="t" style="left:172.60px;top:72.02px;font-size:7.2px;line-height:9.36px;color:#444;font-weight:bold;letter-spacing:-0.995px;text-decoration:line-through;">abc</div>
<div class="t" style="left:189.60px;top:70.12px;font-size:9.5px;line-height:12.35px;color:#333;font-weight:bold;letter-spacing:-0.497px;">x</div>
<div class="t" style="left:195.00px;top:76.78px;font-size:4.5px;line-height:5.85px;color:#2e74b5;font-weight:bold;letter-spacing:-0.116px;">2</div>
<div class="t" style="left:205.40px;top:70.12px;font-size:9.5px;line-height:12.35px;color:#333;font-weight:bold;letter-spacing:-0.497px;">x</div>
<div class="t" style="left:211.00px;top:70.38px;font-size:4.5px;line-height:5.85px;color:#2e74b5;font-weight:bold;letter-spacing:-0.116px;">2</div>
<div class="ssep" style="left:218px;top:70px"></div>
<div class="t" style="left:188.60px;top:91.70px;font-size:7.7px;line-height:10.01px;color:#444;letter-spacing:-0.347px;">Fuente</div>
<div class="t" style="left:220.80px;top:50.93px;font-size:9.8px;line-height:12.74px;color:#444;letter-spacing:0.053px;">A</div>
<svg style="left:225.6px;top:51px" width="3.6" height="2.4" viewBox="0 0 3.6 2.4"><path d="M0 2.4L1.8 0L3.6 2.4Z" fill="#2e74b5"/></svg>
<div class="t" style="left:236.80px;top:52.40px;font-size:8px;line-height:10.4px;color:#444;letter-spacing:-0.144px;">A</div>
<svg style="left:240.8px;top:51px" width="3.6" height="2.4" viewBox="0 0 3.6 2.4"><path d="M0 0H3.6L1.8 2.4Z" fill="#2e74b5"/></svg>
<div class="ssep" style="left:249px;top:50px"></div>
<div class="t" style="left:254.40px;top:51.11px;font-size:8.6px;line-height:11.18px;color:#555;letter-spacing:-0.816px;">Aa</div>
<svg style="left:267.7px;top:55.199999999999996px" width="4" height="2.4" viewBox="0 0 4 2.4"><path d="M0.3 0.3 L2 2 L3.7 0.3" fill="none" stroke="#777" stroke-width="0.8"/></svg>
<div class="ssep" style="left:278px;top:50px"></div>
<div class="t" style="left:284.00px;top:49.95px;font-size:7px;line-height:9.1px;color:#666;letter-spacing:-0.072px;">A</div>
<svg style="left:285px;top:52.6px" width="9" height="8.4" viewBox="0 0 9 8.4"><path d="M4.6 0.6L8.4 3L4.6 7.8L0.8 5.4Z" fill="#e8788a"/><path d="M1.7 4.3L5.5 6.7" stroke="#f7e6ea" stroke-width="0.6"/></svg>
<svg style="left:224.6px;top:71px" width="8.4" height="9.4" viewBox="0 0 8.4 9.4"><path d="M0.8 9L4.2 0.8L7.6 9M2.2 6H6.2" fill="none" stroke="#4a86c8" stroke-width="2.1" stroke-linejoin="round" stroke-linecap="round"/><path d="M0.8 9L4.2 0.8L7.6 9M2.2 6H6.2" fill="none" stroke="#f3f3f3" stroke-width="0.8" stroke-linejoin="round" stroke-linecap="round"/></svg>
<svg style="left:237.3px;top:75.2px" width="4" height="2.4" viewBox="0 0 4 2.4"><path d="M0.3 0.3 L2 2 L3.7 0.3" fill="none" stroke="#777" stroke-width="0.8"/></svg>
<svg style="left:248.4px;top:71.4px" width="10" height="6.6" viewBox="0 0 10 6.6"><path d="M0.2 3.2H4" stroke="#555" stroke-width="0.8"/><path d="M1.4 1L3 0.4L3.4 2.4" fill="none" stroke="#555" stroke-width="0.7"/><path d="M3.4 6.2L8.6 0.6L9.6 1.6L4.6 6.6Z" fill="#555"/></svg>
<div class="a" style="left:248.1px;top:78.8px;width:10.7px;height:2.2px;background:#ffef00"></div>
<svg style="left:263.4px;top:75.2px" width="4" height="2.4" viewBox="0 0 4 2.4"><path d="M0.3 0.3 L2 2 L3.7 0.3" fill="none" stroke="#777" stroke-width="0.8"/></svg>
<div class="t" style="left:275.60px;top:69.19px;font-size:9.4px;line-height:12.22px;color:#444;letter-spacing:0.134px;">A</div>
<div class="a" style="left:273.6px;top:78.8px;width:10.4px;height:2.2px;background:#ee1111"></div>
<svg style="left:288.6px;top:75.2px" width="4" height="2.4" viewBox="0 0 4 2.4"><path d="M0.3 0.3 L2 2 L3.7 0.3" fill="none" stroke="#777" stroke-width="0.8"/></svg>
<svg style="left:292.4px;top:93.2px" width="6" height="6" viewBox="0 0 6 6"><path d="M0.4 4.5V0.4H4.5" fill="none" stroke="#777" stroke-width="0.8"/><path d="M2 2L5.4 5.4M5.6 2.8V5.6H2.8" fill="none" stroke="#777" stroke-width="0.8"/></svg>
<svg style="left:308.6px;top:50.6px" width="9" height="9.8" viewBox="0 0 9 9.8"><path d="M3 1.2H8.8M3 4.8H8.8M3 8.4H8.8" stroke="#777" stroke-width="0.9"/><rect x="0" y="0.4" width="1.5" height="1.5" fill="#2e74b5"/><rect x="0" y="4" width="1.5" height="1.5" fill="#2e74b5"/><rect x="0" y="7.6" width="1.5" height="1.5" fill="#2e74b5"/></svg>
<svg style="left:323px;top:55.199999999999996px" width="4" height="2.4" viewBox="0 0 4 2.4"><path d="M0.3 0.3 L2 2 L3.7 0.3" fill="none" stroke="#777" stroke-width="0.8"/></svg>
<svg style="left:333.4px;top:50.6px" width="9.8" height="9.8" viewBox="0 0 9.8 9.8"><path d="M3.4 1.2H9.6M3.4 4.8H9.6M3.4 8.4H9.6" stroke="#777" stroke-width="0.9"/><path d="M0.9 0V2.4M0.2 3.8H1.5V4.8H0.2V5.9H1.6M0.2 7.3H1.5V9.6H0.2M0.4 8.4H1.5" stroke="#2e74b5" stroke-width="0.7" fill="none"/></svg>
<svg style="left:348.2px;top:55.199999999999996px" width="4" height="2.4" viewBox="0 0 4 2.4"><path d="M0.3 0.3 L2 2 L3.7 0.3" fill="none" stroke="#777" stroke-width="0.8"/></svg>
<svg style="left:358.2px;top:50.6px" width="11.2" height="9.8" viewBox="0 0 11.2 9.8"><path d="M2.6 1.2H8.6M5 4.8H11M7 8.4H11" stroke="#777" stroke-width="0.9"/><path d="M0.6 0V2.4M2.8 3.8H3.8V5.8H2.8M5.2 7.2V9.6" stroke="#2e74b5" stroke-width="0.7" fill="none"/></svg>
<svg style="left:372.2px;top:55.199999999999996px" width="4" height="2.4" viewBox="0 0 4 2.4"><path d="M0.3 0.3 L2 2 L3.7 0.3" fill="none" stroke="#777" stroke-width="0.8"/></svg>
<div class="ssep" style="left:383px;top:50px"></div>
<svg style="left:387.6px;top:50.6px" width="11" height="9.8" viewBox="0 0 11 9.8"><path d="M0 0.6H11M5.4 3.2H11M5.4 5.8H11M0 8.8H11" stroke="#777" stroke-width="0.9"/><path d="M4.4 4.5H1M2.6 2.8L0.6 4.5L2.6 6.2" stroke="#2e74b5" stroke-width="1" fill="none"/></svg>
<svg style="left:403px;top:50.6px" width="11" height="9.8" viewBox="0 0 11 9.8"><path d="M0 0.6H11M5.4 3.2H11M5.4 5.8H11M0 8.8H11" stroke="#777" stroke-width="0.9"/><path d="M0.2 4.5H3.8M2.2 2.8L4.2 4.5L2.2 6.2" stroke="#2e74b5" stroke-width="1" fill="none"/></svg>
<div class="ssep" style="left:418.5px;top:50px"></div>
<div class="t" style="left:424.40px;top:49.74px;font-size:6.4px;line-height:8.32px;color:#2e74b5;font-weight:bold;letter-spacing:-0.025px;">A</div>
<div class="t" style="left:424.60px;top:55.07px;font-size:6.2px;line-height:8.06px;color:#8a3fa8;font-weight:bold;letter-spacing:0.619px;">Z</div>
<svg style="left:429.6px;top:50.8px" width="4.6" height="9.6" viewBox="0 0 4.6 9.6"><path d="M2.3 0V8.8M0.3 6.8L2.3 9L4.3 6.8" stroke="#444" stroke-width="0.9" fill="none"/></svg>
<div class="ssep" style="left:438.8px;top:50px"></div>
<div class="t" style="left:445.40px;top:49.23px;font-size:11.5px;line-height:14.95px;color:#555;letter-spacing:0.613px;">¶</div>
<svg style="left:308.7px;top:72px" width="9.4" height="8" viewBox="0 0 9.4 8"><path d="M0 0.5H9.2M0 2.7H6.4M0 4.9H9.2M0 7.1H6.4" stroke="#8a8a8a" stroke-width="0.9"/></svg>
<svg style="left:324px;top:72px" width="9.6" height="8" viewBox="0 0 9.6 8"><path d="M0 0.5H9.5M1.6 2.7H7.9M0 4.9H9.5M1.6 7.1H7.9" stroke="#8a8a8a" stroke-width="0.9"/></svg>
<svg style="left:339.8px;top:72px" width="9.4" height="8" viewBox="0 0 9.4 8"><path d="M0 0.5H9.3M2.8 2.7H9.3M0 4.9H9.3M2.8 7.1H9.3" stroke="#8a8a8a" stroke-width="0.9"/></svg>
<div class="a" style="left:352.7px;top:68.6px;width:14.6px;height:15.2px;background:#c8c8c8;border:1px solid #8e8e8e"></div>
<svg style="left:355.4px;top:72px" width="9.4" height="8" viewBox="0 0 9.4 8"><path d="M0 0.5H9.3M0 2.7H9.3M0 4.9H9.3M0 7.1H9.3" stroke="#6a6a6a" stroke-width="0.9"/></svg>
<div class="ssep" style="left:370.2px;top:70px"></div>
<svg style="left:375.2px;top:71px" width="9.8" height="10" viewBox="0 0 9.8 10"><path d="M4 2H9.6M4 4.2H9.6M4 6.4H9.6M4 8.6H9.6" stroke="#888" stroke-width="0.9"/><path d="M1.6 0.8V9.4M0.2 2.4L1.6 0.6L3 2.4M0.2 7.8L1.6 9.6L3 7.8" stroke="#2e74b5" stroke-width="0.9" fill="none"/></svg>
<svg style="left:388.4px;top:75.2px" width="4" height="2.4" viewBox="0 0 4 2.4"><path d="M0.3 0.3 L2 2 L3.7 0.3" fill="none" stroke="#777" stroke-width="0.8"/></svg>
<div class="ssep" style="left:399.3px;top:70px"></div>
<svg style="left:404px;top:70.6px" width="11" height="11" viewBox="0 0 11 11"><path d="M2.4 5L5.4 1.6L9 5L5.6 8.4Z" fill="#fdfdfd" stroke="#666" stroke-width="0.8"/><path d="M4.2 3V1.2A1 1 0 0 1 6.2 1.2V3" fill="none" stroke="#666" stroke-width="0.7"/><path d="M9.4 5.2C10.4 6.6 10.4 7.6 9.4 7.8C8.6 7.6 8.6 6.6 9.4 5.2Z" fill="#2e74b5"/><rect x="0.6" y="8.8" width="9.6" height="1.8" fill="#fafafa" stroke="#9a9a9a" stroke-width="0.5"/></svg>
<svg style="left:419px;top:75.2px" width="4" height="2.4" viewBox="0 0 4 2.4"><path d="M0.3 0.3 L2 2 L3.7 0.3" fill="none" stroke="#777" stroke-width="0.8"/></svg>
<svg style="left:430px;top:71.4px" width="8.8" height="8.6" viewBox="0 0 8.8 8.6"><path d="M0.5 0.5H8.3V8.1H0.5ZM4.4 0.5V8.1M0.5 4.3H8.3" fill="none" stroke="#c2c2c2" stroke-width="0.9"/></svg>
<svg style="left:444px;top:75.2px" width="4" height="2.4" viewBox="0 0 4 2.4"><path d="M0.3 0.3 L2 2 L3.7 0.3" fill="none" stroke="#777" stroke-width="0.8"/></svg>
<div class="t" style="left:363.80px;top:91.70px;font-size:7.7px;line-height:10.01px;color:#444;letter-spacing:-0.236px;">Párrafo</div>
<svg style="left:452.8px;top:93.2px" width="6" height="6" viewBox="0 0 6 6"><path d="M0.4 4.5V0.4H4.5" fill="none" stroke="#777" stroke-width="0.8"/><path d="M2 2L5.4 5.4M5.6 2.8V5.6H2.8" fill="none" stroke="#777" stroke-width="0.8"/></svg>
<div class="a" style="left:468px;top:46.3px;width:290.4px;height:37.2px;background:#fff;border-top:1px solid #e1e1e1;border-bottom:1px solid #e1e1e1"></div>
<div class="a" style="left:468px;top:47px;width:46.9px;height:35.8px;background:#fff;border:1.4px solid #b4b4b4;outline:0.6px solid #d8d8d8"></div>
<div class="t" style="left:472.60px;top:54.26px;font-size:9.3px;line-height:12.09px;color:#222;">AaBbCcE</div>
<div class="a" style="left:510.2px;top:53px;width:3.2px;height:13px;background:#fff"></div>
<div class="t" style="left:476.00px;top:71.53px;font-size:7.8px;line-height:10.14px;color:#555;letter-spacing:-0.041px;">¶ Normal</div>
<div class="t" style="left:519.00px;top:53.41px;font-size:10.6px;line-height:13.78px;color:#222;letter-spacing:-0.095px;">AaBbCc</div>
<div class="t" style="left:518.00px;top:71.53px;font-size:7.8px;line-height:10.14px;color:#555;letter-spacing:-0.213px;">Normal Sa...</div>
<div class="t" style="left:565.80px;top:51.96px;font-size:11.6px;line-height:15.08px;color:#4a8ac8;">AaBbCc</div>
<div class="a" style="left:604.4px;top:50px;width:5px;height:16px;background:#fff"></div>
<div class="t" style="left:572.40px;top:71.53px;font-size:7.8px;line-height:10.14px;color:#555;letter-spacing:-0.202px;">Título 1</div>
<div class="t" style="left:612.60px;top:53.93px;font-size:9.5px;line-height:12.35px;color:#4a8ac8;">AaBbCcE</div>
<div class="a" style="left:651px;top:52px;width:5px;height:13px;background:#fff"></div>
<div class="t" style="left:619.00px;top:71.53px;font-size:7.8px;line-height:10.14px;color:#555;letter-spacing:-0.145px;">Título 2</div>
<div class="t" style="left:659.30px;top:53.86px;font-size:9.6px;line-height:12.48px;color:#111;font-family:'Liberation Serif';font-weight:bold;letter-spacing:0.231px;">AaBbCcl</div>
<div class="t" style="left:665.90px;top:71.53px;font-size:7.8px;line-height:10.14px;color:#555;letter-spacing:-0.174px;">Título 5</div>
<div class="t" style="left:706.00px;top:55.17px;font-size:8.2px;line-height:10.66px;color:#3f6fa8;letter-spacing:-0.335px;">AaBbCcDc</div>
<div class="t" style="left:712.70px;top:71.53px;font-size:7.8px;line-height:10.14px;color:#555;letter-spacing:-0.117px;">Título 6</div>
<div class="a" style="left:749.3px;top:46.3px;width:9.2px;height:12.6px;background:#d9d9d9;border:1px solid #e1e1e1"></div>
<div class="a" style="left:749.3px;top:58.9px;width:9.2px;height:12.3px;background:#fff;border:1px solid #d0d0d0"></div>
<div class="a" style="left:749.3px;top:71.2px;width:9.2px;height:12.3px;background:#fff;border:1px solid #d0d0d0"></div>
<svg style="left:752px;top:51.6px" width="4" height="2.2" viewBox="0 0 4 2.2"><path d="M0 2.2L2 0L4 2.2Z" fill="#bdbdbd"/></svg>
<svg style="left:751.8px;top:64.2px" width="4.2" height="2.4" viewBox="0 0 4.2 2.4"><path d="M0 0H4.2L2.1 2.4Z" fill="#555"/></svg>
<svg style="left:751.8px;top:75.4px" width="4.2" height="4.6" viewBox="0 0 4.2 4.6"><path d="M0 0.4H4.2" stroke="#555" stroke-width="0.8"/><path d="M0 2H4.2L2.1 4.4Z" fill="#555"/></svg>
<div class="t" style="left:596.60px;top:91.70px;font-size:7.7px;line-height:10.01px;color:#444;letter-spacing:0.024px;">Estilos</div>
<svg style="left:757.7px;top:93.2px" width="6" height="6" viewBox="0 0 6 6"><path d="M0.4 4.5V0.4H4.5" fill="none" stroke="#777" stroke-width="0.8"/><path d="M2 2L5.4 5.4M5.6 2.8V5.6H2.8" fill="none" stroke="#777" stroke-width="0.8"/></svg>
<svg style="left:773.6px;top:46.6px" width="8.8" height="8.6" viewBox="0 0 8.8 8.6"><circle cx="5.4" cy="3.2" r="2.6" fill="none" stroke="#2e74b5" stroke-width="1"/><path d="M3.4 5.2L0.5 8.1" stroke="#2e74b5" stroke-width="1.3"/></svg>
<div class="t" style="left:785.50px;top:46.30px;font-size:7.7px;line-height:10.01px;color:#262626;letter-spacing:-0.308px;">Buscar</div>
<svg style="left:815.2px;top:50.199999999999996px" width="4" height="2.4" viewBox="0 0 4 2.4"><path d="M0.3 0.3 L2 2 L3.7 0.3" fill="none" stroke="#777" stroke-width="0.8"/></svg>
<div class="t" style="left:773.00px;top:58.34px;font-size:6.4px;line-height:8.32px;color:#8a3fa8;letter-spacing:0.291px;">ab</div>
<div class="t" style="left:777.00px;top:64.34px;font-size:6.4px;line-height:8.32px;color:#2e74b5;letter-spacing:0.250px;">ac</div>
<svg style="left:773px;top:66px" width="4.4" height="3.4" viewBox="0 0 4.4 3.4"><path d="M0.2 0.4C0.8 2.2 2.2 2.8 4 2.4M2.6 1L4.2 2.4L2.8 3.4" fill="none" stroke="#2e74b5" stroke-width="0.7"/></svg>
<div class="t" style="left:785.50px;top:61.90px;font-size:7.7px;line-height:10.01px;color:#262626;letter-spacing:-0.228px;">Reemplazar</div>
<svg style="left:775.4px;top:76px" width="5.6" height="8.6" viewBox="0 0 5.6 8.6"><path d="M0.5 0.6V7L2.2 5.6L3.4 8.2L4.4 7.8L3.2 5.2H5.2Z" fill="#fdfdfd" stroke="#666" stroke-width="0.7"/></svg>
<div class="t" style="left:785.50px;top:76.20px;font-size:7.7px;line-height:10.01px;color:#262626;letter-spacing:-0.137px;">Seleccionar</div>
<svg style="left:827.2px;top:80.2px" width="4" height="2.4" viewBox="0 0 4 2.4"><path d="M0.3 0.3 L2 2 L3.7 0.3" fill="none" stroke="#777" stroke-width="0.8"/></svg>
<div class="t" style="left:791.40px;top:91.70px;font-size:7.7px;line-height:10.01px;color:#444;letter-spacing:-0.186px;">Edición</div>
<svg style="left:871.6px;top:93.4px" width="9.4" height="5" viewBox="0 0 9.4 5"><path d="M0.4 4.6L4.7 0.6L9 4.6" fill="none" stroke="#555" stroke-width="1"/></svg>
<div id="status"></div>
<div class="t" style="left:6.00px;top:460.67px;font-size:7.9px;line-height:10.27px;color:#444;letter-spacing:-0.417px;">Página 202 de 336</div>
<div class="t" style="left:78.00px;top:460.67px;font-size:7.9px;line-height:10.27px;color:#444;letter-spacing:-0.385px;">53787 palabras</div>
<svg style="left:140.4px;top:461px" width="8.4" height="6" viewBox="0 0 8.4 6"><path d="M0.4 0.4H3.6V6M3.6 0.4H7.6V6M0.4 0.4V6" fill="none" stroke="#666" stroke-width="0.8"/><path d="M5 2.4L7 4.8M7 2.4L5 4.8" stroke="#666" stroke-width="0.7"/></svg>
<svg style="left:162.6px;top:460.6px" width="8.4" height="6" viewBox="0 0 8.4 6"><circle cx="3.6" cy="4.4" r="3.2" fill="none" stroke="#666" stroke-width="0.8"/><path d="M5.2 1.2L6.6 2.6L8.2 0.2" fill="none" stroke="#666" stroke-width="0.7"/></svg>
<div class="t" style="left:174.80px;top:460.67px;font-size:7.9px;line-height:10.27px;color:#444;letter-spacing:-0.204px;">Accesibilidad: es necesario investigar</div>
<svg style="left:699.6px;top:460.6px" width="9" height="6" viewBox="0 0 9 6"><path d="M0.4 0.4H4V6H0.4ZM5 0.4H8.6V6H5Z" fill="#9a9a9a" stroke="#777" stroke-width="0.6"/></svg>
<div class="a" style="left:717.6px;top:459px;width:25.6px;height:7px;background:#c8c8c8"></div>
<svg style="left:726px;top:460.6px" width="8.6" height="6" viewBox="0 0 8.6 6"><rect x="0.4" y="0.4" width="7.8" height="6" fill="#9a9a9a" stroke="#666" stroke-width="0.7"/></svg>
<svg style="left:752px;top:460.6px" width="8.6" height="6" viewBox="0 0 8.6 6"><rect x="0.4" y="0.4" width="7.8" height="6" fill="#fafafa" stroke="#777" stroke-width="0.7"/><circle cx="6.4" cy="4.4" r="2" fill="#9a9a9a"/></svg>
<div class="a" style="left:773px;top:464.2px;width:4.4px;height:0.9px;background:#555"></div>
<div class="a" style="left:782px;top:464.2px;width:64.6px;height:0.9px;background:#777"></div>
<div class="a" style="left:799.2px;top:461px;width:2.2px;height:6px;background:#444"></div>
<div class="a" style="left:849.6px;top:464.2px;width:4.6px;height:0.9px;background:#555"></div>
<div class="a" style="left:851.5px;top:462px;width:0.9px;height:5px;background:#555"></div>
<div class="t" style="left:863.80px;top:461.31px;font-size:6.9px;line-height:8.97px;color:#444;letter-spacing:-0.398px;">60%</div>
</body></html>
